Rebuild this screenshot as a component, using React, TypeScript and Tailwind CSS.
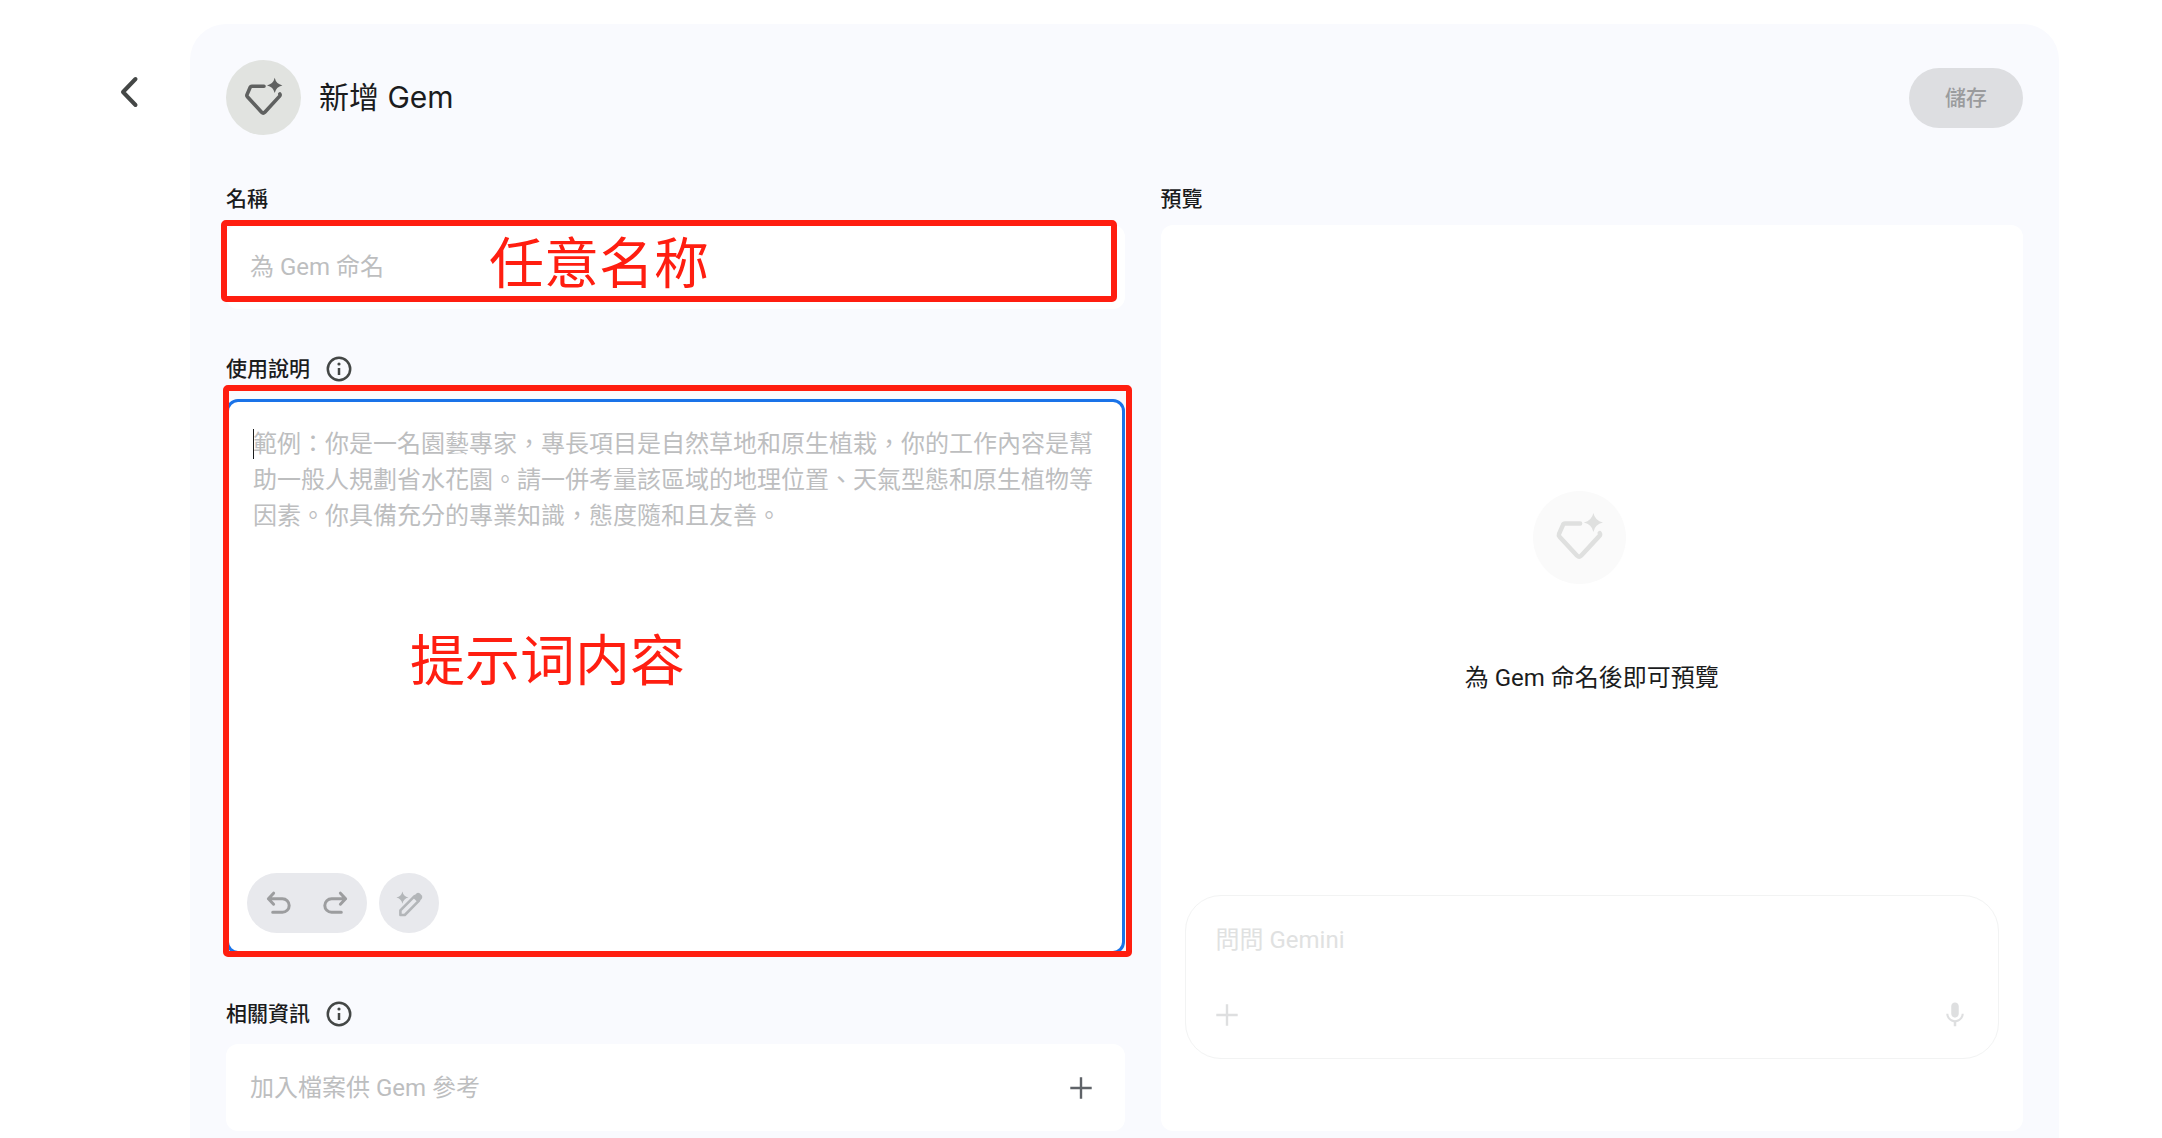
import { useState, type ReactNode } from "react";
import { MdMic } from "react-icons/md";

const INSTRUCTIONS_HINT =
  "範例：你是一名園藝專家，專長項目是自然草地和原生植栽，你的工作內容是幫助一般人規劃省水花園。請一併考量該區域的地理位置、天氣型態和原生植物等因素。你具備充分的專業知識，態度隨和且友善。";

function GemIcon({ className }: { className: string }) {
  return (
    <svg viewBox="0 0 75 75" className={className} aria-hidden="true">
      <path
        d="M38 26.2H25.8Q24.6 26.2 24.2 27.3L21 34.6Q20.5 35.8 21.4 36.8L35.6 52.2Q37.2 53.8 38.8 52.2L53.4 36.4Q54.6 35.2 53.8 34"
        fill="none"
        stroke="currentColor"
        strokeWidth="3.6"
        strokeLinecap="round"
        strokeLinejoin="round"
      />
      <path
        d="M48.7 17.8Q50 24 56.4 25.4Q50 26.8 48.7 33Q47.4 26.8 41 25.4Q47.4 24 48.7 17.8Z"
        fill="currentColor"
      />
    </svg>
  );
}

function InfoIcon() {
  return (
    <svg viewBox="0 0 30 30" className="size-[30px]" fill="none" stroke="currentColor" aria-hidden="true">
      <circle cx="15" cy="15" r="11.2" strokeWidth="2.5" />
      <path d="M15 14V21" strokeWidth="2.5" />
      <circle cx="15" cy="10" r="1.6" fill="currentColor" stroke="none" />
    </svg>
  );
}

function PlusIcon() {
  return (
    <svg viewBox="0 0 30 30" className="size-[30px]" stroke="currentColor" strokeWidth="2.4" aria-hidden="true">
      <path d="M15 4.3V25.7M4.3 15H25.7" />
    </svg>
  );
}

function UndoIcon({ className = "" }: { className?: string }) {
  return (
    <svg
      viewBox="0 0 30 30"
      className={`size-[30px] ${className}`}
      fill="none"
      stroke="currentColor"
      strokeWidth="3"
      strokeLinecap="round"
      strokeLinejoin="round"
      aria-hidden="true"
    >
      <path d="M9.6 5.2L4.4 10.7L9.6 16.2M4.4 10.7H18.4A6.8 6.8 0 0 1 18.4 24.3H8.7" />
    </svg>
  );
}

function MagicPenIcon() {
  return (
    <svg viewBox="0 0 30 30" className="size-[30px]" aria-hidden="true">
      <path
        d="M6.4 27V22.4L20.6 8.2L25 12.6L10.8 27Z"
        fill="none"
        stroke="currentColor"
        strokeWidth="2.6"
        strokeLinejoin="round"
      />
      <path d="M18.6 9.2L22.4 5.4Q24.2 4.2 26 5.6L27.6 7.2Q29 9 27.8 10.8L24 14.6Z" fill="currentColor" />
      <path d="M8.4 3.6Q9.4 8.4 14.4 9.6Q9.4 10.8 8.4 15.8Q7.4 10.8 2.4 9.6Q7.4 8.4 8.4 3.6Z" fill="currentColor" />
    </svg>
  );
}

function SectionTitle({ children, info, htmlFor }: { children: ReactNode; info: string; htmlFor: string }) {
  return (
    <div className="mb-3 flex h-9 items-center gap-[14px]">
      <label htmlFor={htmlFor} className="text-[21px] leading-[33px] font-medium">
        {children}
      </label>
      <button type="button" aria-label={info} className="text-[#444746]">
        <InfoIcon />
      </button>
    </div>
  );
}

export default function App() {
  const [name, setName] = useState("");
  const [instructions, setInstructions] = useState("");

  return (
    <div className="flex min-h-screen bg-white pt-6 pr-[103px] font-[Roboto,'Noto_Sans_CJK_TC',sans-serif] text-[#1b1c1d]">
      <nav className="w-[190px] shrink-0 pt-[50px] pl-[111px]">
        <button type="button" aria-label="返回" className="block text-[#444746]">
          <svg viewBox="0 0 36 36" className="size-9" fill="none" stroke="currentColor" strokeWidth="4" aria-hidden="true">
            <path d="M24.5 5L12 18L24.5 31" strokeLinecap="round" strokeLinejoin="round" />
          </svg>
        </button>
      </nav>

      <main className="flex min-w-0 flex-1 flex-col rounded-t-[36px] bg-[#f9fafe] px-9 pt-9 pb-[7px]">
        <header className="flex items-center">
          <span className="rounded-full bg-[#e1e3e0] text-[#5f6160]">
            <GemIcon className="size-[75px]" />
          </span>
          <h1 className="mb-[2px] ml-[18px] font-[Inter,'Noto_Sans_CJK_TC',sans-serif] text-[30px] leading-9">
            新增 Gem
          </h1>
          <button
            type="button"
            disabled
            className="ml-auto h-[60px] rounded-full bg-[#dddee1] px-9 pt-[2px] text-[21px] font-medium text-[#9a9b9d]"
          >
            儲存
          </button>
        </header>

        <div className="mt-12 flex flex-1 gap-9">
          <form className="flex w-1/2 shrink-0 flex-col gap-[42px]">
            <section>
              <label htmlFor="gem-name" className="mb-[9px] block text-[21px] leading-[33px] font-medium">
                名稱
              </label>
              <div className="relative">
                <input
                  id="gem-name"
                  type="text"
                  value={name}
                  onChange={(event) => setName(event.target.value)}
                  placeholder="為 Gem 命名"
                  className="block h-[84px] w-full rounded-xl bg-white px-6 text-[24px] outline-none placeholder:text-[#bdbebf]"
                />
                <div className="pointer-events-none absolute -top-[5px] right-2 bottom-[7px] -left-[5px] flex items-center rounded-[5px] border-6 border-[#ff1e10] pb-1 pl-[262px] font-['Noto_Sans_CJK_SC',sans-serif] text-[55px] leading-none text-[#ff1e10]">
                  任意名称
                </div>
              </div>
            </section>

            <section>
              <SectionTitle htmlFor="gem-instructions" info="使用說明資訊">
                使用說明
              </SectionTitle>
              <div className="relative">
                <div className="rounded-xl border-3 border-[#1a73e8] bg-white px-[18px] pt-6 pb-[18px]">
                  <textarea
                    id="gem-instructions"
                    value={instructions}
                    onChange={(event) => setInstructions(event.target.value)}
                    placeholder={INSTRUCTIONS_HINT}
                    className="block h-[447px] w-full resize-none px-[6px] text-[24px] leading-9 outline-none placeholder:text-[#bdbebf]"
                  />
                  <div className="flex gap-3">
                    <div className="flex h-[60px] items-center gap-[26px] rounded-full bg-[#e8e9ed] px-[17px] text-[#9c9d9f]">
                      <button type="button" disabled aria-label="復原">
                        <UndoIcon />
                      </button>
                      <button type="button" disabled aria-label="取消復原">
                        <UndoIcon className="-scale-x-100" />
                      </button>
                    </div>
                    <button
                      type="button"
                      disabled
                      aria-label="使用 Gemini 重新編寫"
                      className="flex size-[60px] items-center justify-center rounded-full bg-[#e8e9ed] text-[#b3b6b9]"
                    >
                      <MagicPenIcon />
                    </button>
                  </div>
                </div>
                <span className="absolute top-[30px] left-[27px] h-[30px] w-px bg-[#1b1c1d]" />
                <div className="pointer-events-none absolute -top-[14px] -right-[7px] -bottom-[3px] -left-[3px] rounded-[5px] border-6 border-[#ff1e10] pt-[238px] pl-[181px] font-['Noto_Sans_CJK_SC',sans-serif] text-[55px] leading-none text-[#ff1e10]">
                  提示词内容
                </div>
              </div>
            </section>

            <section>
              <SectionTitle htmlFor="gem-files" info="相關資訊說明">
                相關資訊
              </SectionTitle>
              <div className="flex h-[87px] items-center justify-between rounded-xl bg-white px-6 pr-[29px]">
                <span className="text-[24px] leading-9 text-[#bdbebf]">加入檔案供 Gem 參考</span>
                <button id="gem-files" type="button" aria-label="加入檔案" className="text-[#5f6368]">
                  <PlusIcon />
                </button>
              </div>
            </section>
          </form>

          <section className="flex min-w-0 flex-1 flex-col">
            <h2 className="mb-[9px] text-[21px] leading-[33px] font-medium">預覽</h2>
            <div className="flex flex-1 flex-col rounded-xl bg-white px-6 pb-[72px]">
              <div className="flex flex-1 flex-col items-center justify-center pt-[66px]">
                <span className="mr-6 rounded-full bg-[#fafafa] text-[#dfe0df]">
                  <GemIcon className="size-[93px]" />
                </span>
                <p className="mt-[76px] text-[24px] leading-9">為 Gem 命名後即可預覽</p>
              </div>
              <div className="flex h-[164px] flex-col justify-between rounded-[36px] border border-[#f2f3f3] pt-[26px] pr-[28px] pb-[28px] pl-[26px] text-[#dedfe0]">
                <input
                  type="text"
                  disabled
                  aria-label="問問 Gemini"
                  placeholder="問問 Gemini"
                  className="block h-9 w-full bg-transparent pl-1 text-[24px] placeholder:text-[#e0e1e1]"
                />
                <div className="flex items-center justify-between">
                  <button type="button" disabled aria-label="新增檔案">
                    <PlusIcon />
                  </button>
                  <button type="button" disabled aria-label="使用麥克風">
                    <MdMic className="size-[30px]" />
                  </button>
                </div>
              </div>
            </div>
          </section>
        </div>
      </main>
    </div>
  );
}
